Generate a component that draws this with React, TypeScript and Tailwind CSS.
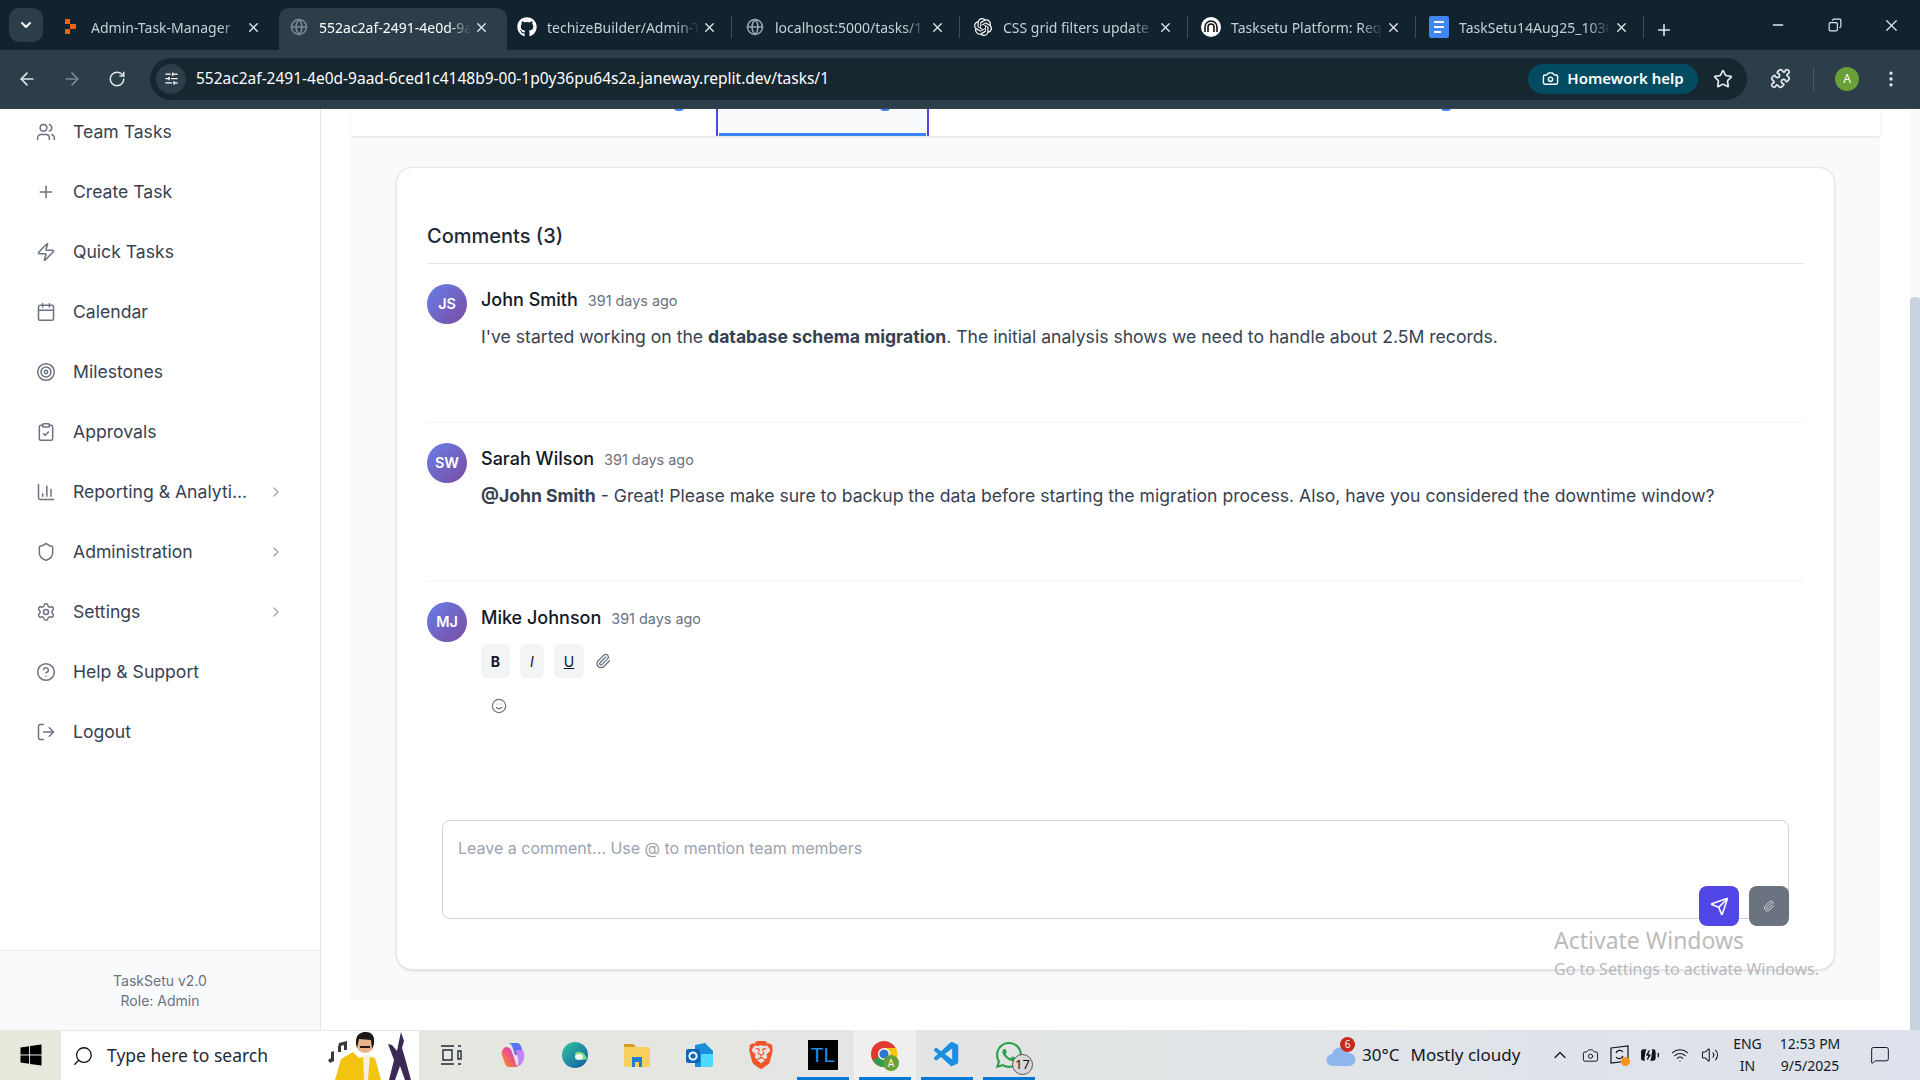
import type { ReactNode } from "react"
import {
  ArrowLeft, ArrowRight, BarChart3, Calendar, ChevronDown, ChevronRight, ChevronUp, CircleHelp,
  ClipboardCheck, Copy, EllipsisVertical, Globe, LogOut, Minus, Paperclip, Plus, Puzzle, RotateCw,
  Search, Send, Settings, Shield, SlidersHorizontal, Smile, Star, Target, Users, Volume2, Wifi, X, Zap,
  Camera, BatteryCharging, MessageSquare,
} from "lucide-react"
import { FaGithub, FaWhatsapp, FaWindows } from "react-icons/fa"
import { SiBrave, SiOpenai } from "react-icons/si"
import { VscVscode } from "react-icons/vsc"

const uiFont = { fontFamily: '"Noto Sans", "Open Sans", sans-serif' }

function ReplitIcon() {
  return (
    <svg width="16" height="18" viewBox="0 0 16 18">
      <path d="M2 1h5v5H2zM7 6h6v5H7zM2 11h5v5H2z" fill="#f26207" />
    </svg>
  )
}

function DocsIcon() {
  return (
    <svg width="20" height="22" viewBox="0 0 20 22">
      <rect width="20" height="22" rx="2" fill="#4285f4" />
      <path d="M5 6h10M5 11h10M5 16h7" stroke="#fff" strokeWidth="2" />
    </svg>
  )
}

function TasksetuIcon() {
  return (
    <svg width="20" height="20" viewBox="0 0 20 20">
      <circle cx="10" cy="10" r="10" fill="#fff" />
      <path d="M4 15V10a6 6 0 0 1 12 0v5M7 15v-5a3 3 0 0 1 6 0v5" fill="none" stroke="#111" strokeWidth="1.6" />
    </svg>
  )
}

const tabs: { title: string; icon: ReactNode; active?: boolean; sep?: boolean }[] = [
  { title: "Admin-Task-Manager", icon: <ReplitIcon /> },
  { title: "552ac2af-2491-4e0d-9aad", icon: <Globe size={18} className="text-[#7b8a94]" />, active: true },
  { title: "techizeBuilder/Admin-Task", icon: <FaGithub size={20} className="text-white" />, sep: true },
  { title: "localhost:5000/tasks/1", icon: <Globe size={18} className="text-[#9aa7af]" />, sep: true },
  { title: "CSS grid filters update", icon: <SiOpenai size={18} className="text-white" />, sep: true },
  { title: "Tasksetu Platform: Req", icon: <TasksetuIcon />, sep: true },
  { title: "TaskSetu14Aug25_1030", icon: <DocsIcon />, sep: true },
]

function BrowserBar() {
  return (
    <div style={uiFont} className="shrink-0">
      <div className="h-[50px] bg-[#10232e] flex items-end relative">
        <div className="absolute left-[9px] top-[8px] w-[34px] h-[34px] rounded-[10px] bg-[#2c3e4a] flex items-center justify-center">
          <ChevronDown size={16} strokeWidth={3} className="text-white" />
        </div>
        <div className="ml-[51px] flex">
          {tabs.map((t) => (
            <div
              key={t.title}
              className={`w-[228px] h-[42px] flex items-center rounded-t-[10px] pb-1 ${t.active ? "bg-[#2c3e4a]" : ""}`}
            >
              <span className="w-[38px] ml-[1px] flex justify-center shrink-0">{t.icon}</span>
              <span
                className={`w-[152px] ml-[1px] overflow-hidden whitespace-nowrap text-[14px] [mask-image:linear-gradient(to_right,black_85%,transparent)] ${t.active ? "text-white" : "text-[#c7d0d6]"}`}
              >
                {t.title}
              </span>
              <X size={15} strokeWidth={2.2} className="ml-[3px] text-[#e3e8eb] shrink-0" />
              <span className={`ml-[14px] h-[22px] w-px ${t.sep ? "bg-[#3c4d58]" : ""}`} />
            </div>
          ))}
        </div>
        <Plus size={18} strokeWidth={2.2} className="ml-[8px] mb-[11px] text-[#e3e8eb]" />
        <div className="ml-auto flex items-center h-full text-[#e3e8eb]">
          <div className="w-[57px] flex justify-center"><Minus size={16} /></div>
          <div className="w-[57px] flex justify-center"><Copy size={14} className="-scale-x-100" /></div>
          <div className="w-[57px] mr-[0px] flex justify-center"><X size={19} strokeWidth={1.5} /></div>
        </div>
      </div>
      <div className="h-[59px] bg-[#2c3e4a] flex items-center border-b border-[#35464f] pb-[1px]">
        <div className="w-[150px] flex items-center shrink-0">
          <ArrowLeft size={20} className="ml-[17px] text-[#dfe5e8]" />
          <ArrowRight size={20} className="ml-[25px] text-[#7a8a94]" />
          <RotateCw size={18} className="ml-[26px] text-[#dfe5e8]" />
        </div>
        <div className="w-[1597px] h-[42px] rounded-full bg-[#16272f] flex items-center pl-[6px] pr-[14px]">
          <div className="w-[30px] h-[30px] rounded-full bg-[#2c3e4a] flex items-center justify-center">
            <SlidersHorizontal size={15} className="text-white" />
          </div>
          <span className="ml-[10px] text-[15.5px] text-white whitespace-nowrap">
            552ac2af-2491-4e0d-9aad-6ced1c4148b9-00-1p0y36pu64s2a.janeway.replit.dev/tasks/1
          </span>
          <div className="ml-auto h-[30px] w-[170px] rounded-full bg-[#024b61] flex items-center justify-center gap-[8px]">
            <Camera size={17} className="text-white" />
            <span className="text-[15px] font-semibold text-white">Homework help</span>
          </div>
          <Star size={20} className="ml-[15px] text-[#e3e8eb]" />
        </div>
        <Puzzle size={21} className="ml-[23px] text-[#dfe5e8]" />
        <div className="ml-[22px] h-[24px] w-px bg-[#4a5a64]" />
        <div className="ml-[21px] w-[24px] h-[24px] rounded-full bg-[#689f38] text-white text-[12px] flex items-center justify-center">A</div>
        <EllipsisVertical size={20} className="ml-[22px] text-[#dfe5e8]" />
      </div>
    </div>
  )
}

const navItems: { label: string; icon: typeof Users; more?: boolean }[] = [
  { label: "Team Tasks", icon: Users },
  { label: "Create Task", icon: Plus },
  { label: "Quick Tasks", icon: Zap },
  { label: "Calendar", icon: Calendar },
  { label: "Milestones", icon: Target },
  { label: "Approvals", icon: ClipboardCheck },
  { label: "Reporting & Analyti...", icon: BarChart3, more: true },
  { label: "Administration", icon: Shield, more: true },
  { label: "Settings", icon: Settings, more: true },
  { label: "Help & Support", icon: CircleHelp },
  { label: "Logout", icon: LogOut },
]

function Sidebar() {
  return (
    <aside className="w-[321px] shrink-0 bg-white border-r border-[#e5e7eb] flex flex-col overflow-hidden">
      <nav className="flex-1 -mt-[7px]">
        {navItems.map((item) => (
          <div key={item.label} className="h-[60px] flex items-center pl-[36px] pr-[36px] text-[#374151]">
            <item.icon size={20} strokeWidth={1.8} className="text-[#6b7280] shrink-0" />
            <span className="ml-[17px] text-[17.6px] whitespace-nowrap">{item.label}</span>
            {item.more && <ChevronRight size={16} className="ml-auto text-[#9ca3af]" />}
          </div>
        ))}
      </nav>
      <div className="h-[80px] border-t border-[#e5e7eb] bg-[#f9fafb] flex flex-col items-center justify-center text-[14px] leading-[20px] text-[#6b7280]">
        <span>TaskSetu v2.0</span>
        <span>Role: Admin</span>
      </div>
    </aside>
  )
}

function Avatar({ initials }: { initials: string }) {
  return (
    <div className="w-[40px] h-[40px] rounded-full bg-gradient-to-br from-[#667eea] to-[#764ba2] flex items-center justify-center text-white text-[14.4px] font-semibold shrink-0">
      {initials}
    </div>
  )
}

function CommentHead({ name }: { name: string }) {
  return (
    <div className="flex items-baseline gap-[10px] h-[34px] pt-[2px]">
      <span className="text-[18px] font-medium text-[#111827]">{name}</span>
      <span className="text-[14.4px] text-[#6b7280]">391 days ago</span>
    </div>
  )
}

function Comment({ name, initials, children }: { name: string; initials: string; children: ReactNode }) {
  return (
    <div className="h-[159px] border-b border-[#f3f4f6] pt-[20px] flex gap-[14px]">
      <Avatar initials={initials} />
      <div className="min-w-0">
        <CommentHead name={name} />
        <p className="mt-[5px] text-[17.6px] leading-[28px] text-[#374151] whitespace-nowrap">{children}</p>
      </div>
    </div>
  )
}

function CommentsCard() {
  return (
    <section className="mt-[31px] mx-[45px] h-[803px] rounded-[16px] border border-[#e5e7eb] bg-white px-[30px] shadow-sm relative">
      <div className="h-[96px] border-b border-[#e5e7eb] flex items-end pb-[12px]">
        <h3 className="text-[20px] font-medium leading-[30px] text-[#1f2937]">Comments (3)</h3>
      </div>
      <Comment name="John Smith" initials="JS">
        I've started working on the <strong className="font-bold">database schema migration</strong>. The initial analysis shows we need to handle about 2.5M records.
      </Comment>
      <Comment name="Sarah Wilson" initials="SW">
        <strong className="font-bold">@John Smith</strong> - Great! Please make sure to backup the data before starting the migration process. Also, have you considered the downtime window?
      </Comment>
      <div className="pt-[20px] flex gap-[14px]">
        <Avatar initials="MJ" />
        <div>
          <CommentHead name="Mike Johnson" />
          <div className="flex items-center h-[34px] mt-[8px] text-[14px] text-[#111827]">
            <button className="w-[29px] h-[34px] rounded-[6px] bg-[#f3f4f6] font-bold">B</button>
            <button className="ml-[10px] w-[24px] h-[34px] rounded-[6px] bg-[#f3f4f6] italic">I</button>
            <button className="ml-[10px] w-[30px] h-[34px] rounded-[6px] bg-[#f3f4f6] underline">U</button>
            <Paperclip size={16} className="ml-[11px] text-[#6b7280]" />
          </div>
          <Smile size={16} strokeWidth={1.7} className="ml-[10px] mt-[20px] text-[#6b7280]" />
        </div>
      </div>
      <div className="absolute left-[45px] right-[45px] top-[652px] h-[99px]">
        <textarea
          readOnly
          placeholder="Leave a comment... Use @ to mention team members"
          className="w-full h-full resize-none rounded-[8px] border border-[#d1d5db] pl-[15px] pt-[15px] text-[16px] leading-[24px] bg-white placeholder:text-[#9ca3af]"
        />
        <div className="absolute right-0 -bottom-[7px] flex gap-[10px]">
          <button className="w-[40px] h-[40px] rounded-[8px] bg-[#4f46e5] flex items-center justify-center">
            <Send size={19} className="text-white" />
          </button>
          <button className="w-[40px] h-[40px] rounded-[8px] bg-[#6b7280] flex items-center justify-center">
            <Paperclip size={12} className="text-[#d1d5db]" />
          </button>
        </div>
      </div>
    </section>
  )
}

function MainArea() {
  return (
    <main className="flex-1 min-w-0 bg-white relative flex">
      <div className="flex-1 px-[30px]">
        <div className="h-[891px] bg-[#f9fafb] flex flex-col">
          <div className="h-[27px] bg-white shadow-[0_1px_3px_rgba(0,0,0,0.1)] relative shrink-0 overflow-hidden">
            <span className="absolute left-[323px] -top-[5px] w-[10px] h-[7px] rounded-full bg-[#3b82f6]" />
            <div className="absolute left-[365px] top-0 w-[213px] h-[27px] border-x-2 border-[#4f46e5] bg-[#f9fafb]">
              <div className="absolute left-[1px] right-[1px] bottom-0 h-[3px] bg-[#3b82f6]" />
            </div>
            <span className="absolute left-[529px] -top-[5px] w-[10px] h-[7px] rounded-full bg-[#3b82f6]" />
            <span className="absolute left-[1090px] -top-[5px] w-[10px] h-[7px] rounded-full bg-[#3b82f6]" />
          </div>
          <CommentsCard />
        </div>
      </div>
      <div className="w-[10px] bg-[#f8fafc] flex flex-col">
        <div className="mt-[188px] flex-1 bg-[#c8d2e0] rounded-t-[4px]" />
      </div>
      {/* windows watermark */}
      <div style={uiFont} className="absolute left-[1233px] top-[815px] pointer-events-none text-[#a8a8a8]/80">
        <div className="text-[23px] leading-[32px]">Activate Windows</div>
        <div className="text-[16px] leading-[26px] whitespace-nowrap">Go to Settings to activate Windows.</div>
      </div>
    </main>
  )
}

function Freddie() {
  return (
    <svg width="94" height="49" viewBox="0 0 94 49">
      <path d="M10 49 16 28 28 21l6 6 8-2 8 2 6 22z" fill="#f2c40f" />
      <path d="M38 24h7l-2 25h-4z" fill="#f5f0e0" />
      <circle cx="40" cy="13" r="9" fill="#e8b48c" />
      <path d="M31 13C30 3 36 1 41 1c6 0 9 4 8 12l-2 5-1-9-12-1-2 9z" fill="#1f1a17" />
      <path d="M35 15h10v2H35z" fill="#1f1a17" />
      <path d="M76 1l3 9-2 7 3 10 6 22h-6l-5-14-5 14h-6l5-20-6-16 4 1 5 6 2-10z" fill="#3a2a55" />
      <path d="M14 12l8-2v9h-3v-5l-3 1v6h-3v-5z" fill="#3a3a3a" />
      <path d="M6 21l3-1v10l-4 2-2-3 3-2z" fill="#3a3a3a" />
    </svg>
  )
}

function CopilotIcon() {
  return (
    <svg width="26" height="26" viewBox="0 0 26 26">
      <defs>
        <linearGradient id="cp1" x1="0" y1="0" x2="1" y2="1"><stop stopColor="#3b82f6" /><stop offset="1" stopColor="#8b5cf6" /></linearGradient>
        <linearGradient id="cp2" x1="0" y1="1" x2="1" y2="0"><stop stopColor="#f59e0b" /><stop offset=".6" stopColor="#ec4899" /><stop offset="1" stopColor="#8b5cf6" /></linearGradient>
      </defs>
      <path d="M8 1h9c2 0 3 1 4 3l3 9h-9L12 4C11 2 10 1 8 1z" fill="url(#cp1)" />
      <path d="M18 25H9c-2 0-3-1-4-3l-3-9c-1-4 1-7 4-8 3 0 5 2 6 5l3 9c1 3 1 5 3 6z" fill="url(#cp2)" />
      <path d="M16 8h6c3 2 3 7 1 11-1 3-3 5-6 5 1-2 2-4 1-7z" fill="#c084fc" />
    </svg>
  )
}

function EdgeIcon() {
  return (
    <svg width="26" height="26" viewBox="0 0 26 26">
      <defs>
        <linearGradient id="ed1" x1="0" y1="0" x2="1" y2="1"><stop stopColor="#36c5a0" /><stop offset="1" stopColor="#0c59a4" /></linearGradient>
      </defs>
      <circle cx="13" cy="13" r="13" fill="url(#ed1)" />
      <path d="M26 15c0-3-3-6-8-6-4 0-8 2-8 7 0 3 2 6 6 7-6 1-12-2-13-8" fill="none" stroke="#fff" strokeOpacity="0" />
      <path d="M25 17c-2 1-5 1-8 0-3-1-4-3-4-5 0-1 1-2 2-2 4-1 8 1 10 7z" fill="#7be07a" />
      <ellipse cx="17" cy="15" rx="4" ry="3" fill="#f2f4f6" />
    </svg>
  )
}

function ExplorerIcon() {
  return (
    <svg width="28" height="26" viewBox="0 0 28 26">
      <path d="M1 4a2 2 0 0 1 2-2h7l3 3h12a2 2 0 0 1 2 2v16a2 2 0 0 1-2 2H3a2 2 0 0 1-2-2z" fill="#f7cf5e" />
      <path d="M1 2h9l3 3H1z" fill="#d69e21" />
      <path d="M9 15h10v10h-3v-5h-4v5H9z" fill="#1d7fd1" />
    </svg>
  )
}

function OutlookIcon() {
  return (
    <svg width="28" height="26" viewBox="0 0 28 26">
      <path d="M10 3l10-2 8 8v12l-8 4H10z" fill="#1a8fd8" />
      <path d="M16 12h12v11a2 2 0 0 1-2 2H16z" fill="#50d9ff" />
      <rect x="1" y="7" width="14" height="14" rx="2" fill="#0f65b7" />
      <circle cx="8" cy="14" r="3.6" fill="none" stroke="#fff" strokeWidth="2" />
    </svg>
  )
}

function ChromeIcon() {
  return (
    <svg width="32" height="32" viewBox="0 0 32 32">
      <circle cx="15" cy="15" r="13" fill="#e0392f" />
      <path d="M15 15 4 21a13 13 0 0 0 13 7z" fill="#2e9e4f" />
      <path d="M15 9h12a13 13 0 0 1-10 19z" fill="#f6c413" />
      <circle cx="15" cy="15" r="6" fill="#fff" />
      <circle cx="15" cy="15" r="4.6" fill="#2a76d2" />
      <circle cx="22" cy="24" r="8" fill="#689f38" />
      <text x="22" y="28" fontSize="10" textAnchor="middle" fill="#fff" style={{ fontFamily: "Roboto, sans-serif" }}>A</text>
    </svg>
  )
}

const taskItems: { key: string; node: ReactNode; open?: boolean; shade?: boolean }[] = [
  { key: "view", node: (
    <svg width="22" height="22" viewBox="0 0 22 22" fill="none" stroke="#1f2937" strokeWidth="1.4">
      <path d="M1 2h13M1 20h13M3 6h9v10H3zM18 2h3M18 7h3v8h-3zM18 20h3" />
    </svg>
  ) },
  { key: "copilot", node: <CopilotIcon /> },
  { key: "edge", node: <EdgeIcon /> },
  { key: "files", node: <ExplorerIcon /> },
  { key: "outlook", node: <OutlookIcon /> },
  { key: "brave", node: <SiBrave size={28} className="text-[#f1562b]" /> },
  { key: "tl", open: true, node: (
    <div style={{ fontFamily: '"Liberation Sans", sans-serif' }} className="w-[30px] h-[30px] bg-black text-[#1f8fe6] text-[21px] leading-[30px] text-center">TL</div>
  ) },
  { key: "chrome", open: true, shade: true, node: <ChromeIcon /> },
  { key: "code", open: true, node: <VscVscode size={30} className="text-[#1b8fe0]" /> },
  { key: "whatsapp", open: true, node: (
    <div className="relative">
      <FaWhatsapp size={30} className="text-[#2e9e4f]" />
      <span className="absolute -right-[9px] -bottom-[5px] w-[21px] h-[21px] rounded-full bg-[#d9d9d9] border border-[#555] text-[13px] leading-[19px] text-center text-[#111]">17</span>
    </div>
  ) },
]

function Taskbar() {
  return (
    <div style={uiFont} className="h-[50px] shrink-0 flex bg-gradient-to-r from-[#e9e8dc] to-[#dde2ec] text-[#111827]">
      <div className="w-[61px] flex items-center justify-center">
        <FaWindows size={24} className="text-black" />
      </div>
      <div className="w-[358px] mt-[1px] bg-white flex items-center relative overflow-hidden">
        <Search size={22} strokeWidth={1.4} className="ml-[11px] -scale-x-100 text-[#111]" />
        <span className="ml-[13px] text-[17.5px] text-[#1f2937]">Type here to search</span>
        <div className="absolute right-0 top-0"><Freddie /></div>
      </div>
      <div className="flex ml-[1px]">
        {taskItems.map((t) => (
          <div key={t.key} className={`w-[62px] flex items-center justify-center relative ${t.shade ? "bg-white/40" : ""}`}>
            {t.node}
            {t.open && <span className="absolute bottom-0 left-[5px] right-[5px] h-[3px] bg-[#0078d4]" />}
          </div>
        ))}
      </div>
      <div className="ml-auto w-[600px] flex items-center shrink-0">
        <div className="w-[225px] flex items-center">
          <div className="ml-[6px] relative">
            <svg width="30" height="24" viewBox="0 0 30 24">
              <path d="M7 23a6 6 0 0 1-1-12 9 9 0 0 1 17-1 6.500 6.500 0 0 1 0 13z" fill="#8fb6ec" />
            </svg>
            <span className="absolute left-[14px] -top-[6px] w-[15px] h-[15px] rounded-full bg-[#c42b1c] text-white text-[10px] leading-[15px] text-center">6</span>
          </div>
          <span className="ml-[6px] text-[17px]">30°C</span>
          <span className="ml-[11px] text-[17px] whitespace-nowrap">Mostly cloudy</span>
        </div>
        <div className="w-[30px] flex justify-center"><ChevronUp size={20} strokeWidth={1.5} /></div>
        <div className="w-[30px] flex justify-center"><Camera size={17} strokeWidth={1.4} /></div>
        <div className="w-[30px] flex justify-center relative">
          <svg width="20" height="20" viewBox="0 0 20 20" fill="none" stroke="#111" strokeWidth="1.2"><path d="M1 3l17-2v15l-17 2z" /><path d="M6 8a4 4 0 0 1 7-1M13 11a4 4 0 0 1-7 1" /></svg>
          <span className="absolute right-[5px] -bottom-[1px] w-[9px] h-[9px] rounded-full bg-[#f7931a]" />
        </div>
        <div className="w-[30px] flex justify-center"><BatteryCharging size={20} strokeWidth={1.6} fill="#111" /></div>
        <div className="w-[30px] flex justify-center"><Wifi size={18} strokeWidth={1.4} /></div>
        <div className="w-[30px] flex justify-center"><Volume2 size={18} strokeWidth={1.4} /></div>
        <div className="w-[45px] text-center text-[14px] leading-[22px]">
          <div>ENG</div>
          <div>IN</div>
        </div>
        <div className="w-[80px] text-center text-[14px] leading-[22px]">
          <div>12:53 PM</div>
          <div>9/5/2025</div>
        </div>
        <div className="w-[60px] flex justify-center"><MessageSquare size={20} strokeWidth={1.2} /></div>
      </div>
    </div>
  )
}

export default function App() {
  return (
    <div style={{ fontFamily: 'Inter, "Noto Sans", sans-serif' }} className="h-screen w-screen flex flex-col overflow-hidden bg-white">
      <BrowserBar />
      <div className="flex-1 min-h-0 flex overflow-hidden">
        <Sidebar />
        <MainArea />
      </div>
      <Taskbar />
    </div>
  )
}
